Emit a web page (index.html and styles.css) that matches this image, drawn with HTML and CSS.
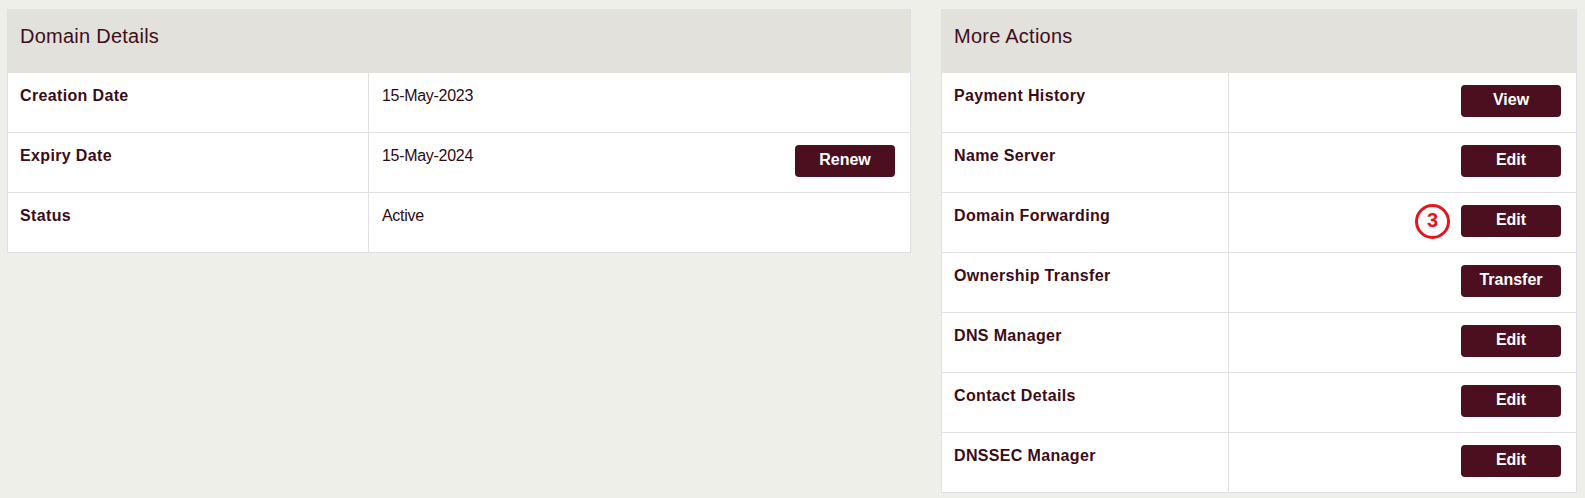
FILE: index.html
```html
<!DOCTYPE html>
<html lang="en">
<head>
<meta charset="utf-8">
<title>Domain Details</title>
<link rel="stylesheet" href="styles.css">
</head>
<body>
<main class="layout">
  <section class="panel panel-details">
    <header class="panel-head">Domain Details</header>
    <div class="row">
      <div class="cell label">Creation Date</div>
      <div class="cell value">15-May-2023</div>
    </div>
    <div class="row">
      <div class="cell label">Expiry Date</div>
      <div class="cell value split"><span>15-May-2024</span><button class="btn">Renew</button></div>
    </div>
    <div class="row">
      <div class="cell label">Status</div>
      <div class="cell value">Active</div>
    </div>
  </section>

  <section class="panel panel-actions">
    <header class="panel-head">More Actions</header>
    <div class="row">
      <div class="cell label">Payment History</div>
      <div class="cell action"><button class="btn">View</button></div>
    </div>
    <div class="row">
      <div class="cell label">Name Server</div>
      <div class="cell action"><button class="btn">Edit</button></div>
    </div>
    <div class="row">
      <div class="cell label">Domain Forwarding</div>
      <div class="cell action"><span class="marker">3</span><button class="btn">Edit</button></div>
    </div>
    <div class="row">
      <div class="cell label">Ownership Transfer</div>
      <div class="cell action"><button class="btn">Transfer</button></div>
    </div>
    <div class="row">
      <div class="cell label">DNS Manager</div>
      <div class="cell action"><button class="btn">Edit</button></div>
    </div>
    <div class="row">
      <div class="cell label">Contact Details</div>
      <div class="cell action"><button class="btn">Edit</button></div>
    </div>
    <div class="row">
      <div class="cell label">DNSSEC Manager</div>
      <div class="cell action"><button class="btn">Edit</button></div>
    </div>
  </section>
</main>
</body>
</html>
```

FILE: styles.css
```css
* { box-sizing: border-box; }

html, body {
  margin: 0;
  background: #efefea;
}

body {
  font-family: "Liberation Sans", Arial, sans-serif;
  color: #3b0c17;
}

.layout {
  display: grid;
  grid-template-columns: 904px 636px;
  column-gap: 30px;
  align-items: start;
  padding: 9px 8px 0 7px;
}

.panel {
  background: #ffffff;
  border-left: 1px solid #dfe0e5;
  border-right: 1px solid #dfe0e5;
}

.panel-head {
  height: 64px;
  background: #e2e1db;
  padding: 15px 12px 0;
  font-size: 20px;
  line-height: 24px;
  letter-spacing: 0.25px;
  color: #3d0f1a;
}

.row {
  display: grid;
  height: 60px;
  border-bottom: 1px solid #dfe0e5;
}

.panel-details .row { grid-template-columns: 360px 1fr; }
.panel-actions .row { grid-template-columns: 286px 1fr; }

.cell {
  padding: 11px 15px 0 12px;
  font-size: 16px;
  line-height: 24px;
}

.label {
  font-weight: bold;
  letter-spacing: 0.35px;
  color: #3b0c17;
}

.value, .action {
  border-left: 1px solid #dfe0e5;
}

.value {
  color: #2e0a12;
  letter-spacing: -0.3px;
  padding-left: 13px;
}

.split {
  display: flex;
  justify-content: space-between;
  align-items: flex-start;
}

.split .btn { margin-top: 1px; }

.action {
  display: flex;
  justify-content: flex-end;
  align-items: flex-start;
  gap: 11px;
  padding-top: 12px;
}

.btn {
  width: 100px;
  height: 32px;
  border: 0;
  border-radius: 4px;
  background: #4b0f1f;
  color: #ffffff;
  font-family: "Liberation Sans", Arial, sans-serif;
  font-weight: bold;
  font-size: 16px;
  line-height: 30px;
  padding: 0 0 2px;
  text-align: center;
}

.marker {
  width: 35px;
  height: 35px;
  margin-top: -1.5px;
  border: 3.5px solid #e8141c;
  border-radius: 50%;
  color: #e8141c;
  font-weight: bold;
  font-size: 20px;
  line-height: 27px;
  text-align: center;
}
```
